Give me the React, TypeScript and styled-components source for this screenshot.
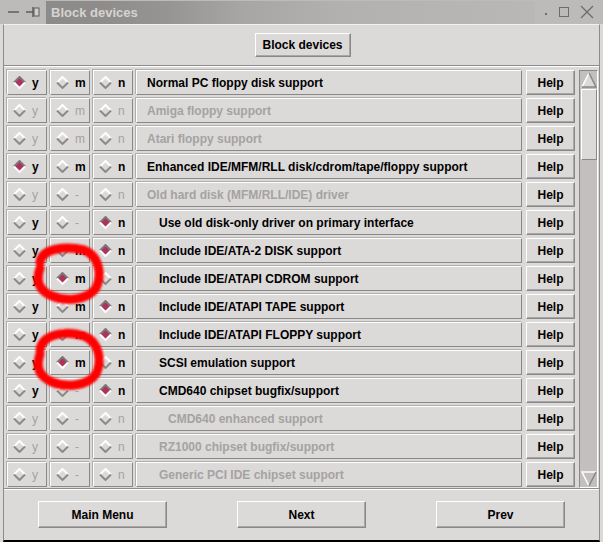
import React from 'react';
import styled, { createGlobalStyle } from 'styled-components';

const GlobalStyle = createGlobalStyle`
  html, body { margin: 0; padding: 0; background: #dcd9d9; }
  body { font-family: "Liberation Sans", Arial, sans-serif; }
`;

const BG = '#dcd9d9';
const LIGHT = '#ffffff';
const DARK = '#8a8787';
const DIS = '#a5a2a2';

const Window = styled.div`
  position: relative;
  width: 603px;
  height: 542px;
  background: ${BG};
  display: flex;
  flex-direction: column;
  overflow: hidden;
`;

const TitleBar = styled.div`
  height: 24px;
  flex: none;
  background: #bdbaba;
  display: flex;
  align-items: center;
  padding: 0 0 0 6px;
`;

const TitleBlock = styled.div`
  margin-left: 6px;
  width: 489px;
  height: 23px;
  display: flex;
  align-items: center;
  padding-left: 5px;
  box-sizing: border-box;
  background: linear-gradient(90deg, #8d8b8a 0%, #8f8d8c 12%, #979494 25%, #a8a5a5 40%, #b3b0b0 60%, #bab7b7 100%);
  color: #d6d3d3;
  font-weight: bold;
  font-size: 13px;
`;

const TitleControls = styled.div`
  display: flex;
  align-items: center;
  gap: 9px;
  margin-left: 10px;
`;

const Body = styled.div`
  flex: 1;
  display: flex;
  flex-direction: column;
  margin-left: 3px;
  margin-right: 3px;
  border-left: 1px solid #8e8b8b;
  border-right: 1px solid #8e8b8b;
  border-top: 1px solid #f2f0f0;
  border-bottom: 2px solid #000;
`;

const TopBar = styled.div`
  height: 40px;
  display: flex;
  justify-content: center;
  padding-top: 8px;
  box-sizing: border-box;
  padding-left: 2px;
`;

const RaisedButton = styled.button<{ $w: number; $h: number }>`
  width: ${(p) => p.$w}px;
  height: ${(p) => p.$h}px;
  background: ${BG};
  border: 1px solid;
  border-color: ${LIGHT} ${DARK} ${DARK} ${LIGHT};
  box-shadow: inset -1px -1px 0 #a9a6a6;
  font-family: "Liberation Sans", Arial, sans-serif;
  font-weight: bold;
  font-size: 12px;
  color: #000;
  padding: 0;
  margin: 0;
  cursor: pointer;
`;

const Separator = styled.div`
  height: 0;
  border-top: 1px solid #8e8b8b;
  border-bottom: 1px solid #fdfdfd;
`;

const ListArea = styled.div`
  display: flex;
  padding: 3px 2px 0 3px;
  gap: 4px;
  height: 418px;
`;

const Rows = styled.div`
  display: flex;
  flex-direction: column;
  gap: 3px;
`;

const Row = styled.div`
  display: flex;
  height: 25px;
  gap: 3px;
`;

const Cell = styled.div<{ $w: number }>`
  width: ${(p) => p.$w}px;
  height: 25px;
  box-sizing: border-box;
  background: ${BG};
  border: 1px solid;
  border-color: ${LIGHT} ${DARK} ${DARK} ${LIGHT};
  box-shadow: -1px -1px 0 #b0adad;
`;

const ChoiceCell = styled(Cell)`
  display: flex;
  align-items: center;
  padding-left: 5px;
  gap: 6px;
  font-weight: bold;
  font-size: 12px;
`;

const Letter = styled.span<{ $dis: boolean }>`
  color: ${(p) => (p.$dis ? DIS : '#000')};
  font-weight: ${(p) => (p.$dis ? 'normal' : 'bold')};
`;

const LabelCell = styled(Cell)<{ $indent: number; $dis: boolean }>`
  display: flex;
  align-items: center;
  padding-left: ${(p) => 10 + p.$indent}px;
  font-size: 12px;
  font-weight: bold;
  color: ${(p) => (p.$dis ? DIS : '#000')};
  white-space: nowrap;
`;

const HelpButton = styled(RaisedButton)`
  margin-left: 1px;
`;

const Scrollbar = styled.div`
  width: 19px;
  height: 418px;
  box-sizing: border-box;
  background: #c3bfbf;
  border: 1px solid;
  border-color: ${DARK} ${LIGHT} ${LIGHT} ${DARK};
  display: flex;
  flex-direction: column;
  padding: 1px 0 0 1px;
`;

const Thumb = styled.div`
  width: 16px;
  height: 71px;
  box-sizing: border-box;
  background: ${BG};
  border: 1px solid;
  border-color: ${LIGHT} ${DARK} ${DARK} ${LIGHT};
  margin-top: 1px;
`;

const Spacer = styled.div`
  flex: 1;
`;

const BottomBar = styled.div`
  flex: 1;
  display: flex;
  align-items: flex-start;
  padding-top: 11px;
  padding-left: 34px;
  gap: 70px;
`;

const Overlay = styled.svg`
  position: absolute;
  left: 0;
  top: 0;
  pointer-events: none;
`;

type Choice = 'y' | 'm' | 'n' | null;

const Diamond: React.FC<{ on: boolean }> = ({ on }) => (
  <svg width="13" height="13" viewBox="0 0 13 13" style={{ flex: 'none' }}>
    {on && <polygon points="6.5,1.5 11.5,6.5 6.5,11.5 1.5,6.5" fill="#b03060" />}
    <polyline points="1,6.5 6.5,1 12,6.5" fill="none" stroke={on ? '#7a7777' : LIGHT} strokeWidth="2" />
    <polyline points="1,6.5 6.5,12 12,6.5" fill="none" stroke={on ? LIGHT : '#8c8989'} strokeWidth="2" />
  </svg>
);

interface RowData {
  label: string;
  sel: Choice;
  m: string;
  dis?: boolean;
  mDis?: boolean;
  indent: number;
}

const rows: RowData[] = [
  { label: 'Normal PC floppy disk support', sel: 'y', m: 'm', indent: 0 },
  { label: 'Amiga floppy support', sel: null, m: 'm', dis: true, indent: 0 },
  { label: 'Atari floppy support', sel: null, m: 'm', dis: true, indent: 0 },
  { label: 'Enhanced IDE/MFM/RLL disk/cdrom/tape/floppy support', sel: 'y', m: 'm', indent: 0 },
  { label: 'Old hard disk (MFM/RLL/IDE) driver', sel: null, m: '-', dis: true, indent: 0 },
  { label: 'Use old disk-only driver on primary interface', sel: 'n', m: '-', mDis: true, indent: 12 },
  { label: 'Include IDE/ATA-2 DISK support', sel: 'n', m: 'm', indent: 12 },
  { label: 'Include IDE/ATAPI CDROM support', sel: 'm', m: 'm', indent: 12 },
  { label: 'Include IDE/ATAPI TAPE support', sel: 'n', m: 'm', indent: 12 },
  { label: 'Include IDE/ATAPI FLOPPY support', sel: 'n', m: 'm', indent: 12 },
  { label: 'SCSI emulation support', sel: 'm', m: 'm', indent: 12 },
  { label: 'CMD640 chipset bugfix/support', sel: 'n', m: '-', mDis: true, indent: 12 },
  { label: 'CMD640 enhanced support', sel: null, m: '-', dis: true, indent: 21 },
  { label: 'RZ1000 chipset bugfix/support', sel: null, m: '-', dis: true, indent: 12 },
  { label: 'Generic PCI IDE chipset support', sel: null, m: '-', dis: true, indent: 12 },
];

const ArrowUp = () => (
  <svg width="16" height="16" viewBox="0 0 16 16" style={{ flex: 'none' }}>
    <polygon points="8,1 15,15 1,15" fill={BG} />
    <polyline points="1,15 8,1" fill="none" stroke={LIGHT} strokeWidth="1.5" />
    <polyline points="8,1 15,15 1,15" fill="none" stroke={DARK} strokeWidth="1.5" />
  </svg>
);

const ArrowDown = () => (
  <svg width="16" height="16" viewBox="0 0 16 16" style={{ flex: 'none' }}>
    <polygon points="1,1 15,1 8,15" fill="#c3bfbf" />
    <polyline points="8,15 1,1 15,1" fill="none" stroke={LIGHT} strokeWidth="1.5" />
    <polyline points="15,1 8,15" fill="none" stroke={DARK} strokeWidth="1.5" />
  </svg>
);

const ListRow: React.FC<{ r: RowData }> = ({ r }) => {
  const d = !!r.dis;
  return (
    <Row>
      <ChoiceCell $w={40}>
        <Diamond on={r.sel === 'y'} />
        <Letter $dis={d}>y</Letter>
      </ChoiceCell>
      <ChoiceCell $w={40}>
        <Diamond on={r.sel === 'm'} />
        <Letter $dis={d || !!r.mDis}>{r.m}</Letter>
      </ChoiceCell>
      <ChoiceCell $w={40}>
        <Diamond on={r.sel === 'n'} />
        <Letter $dis={d}>n</Letter>
      </ChoiceCell>
      <LabelCell $w={386} $indent={r.indent} $dis={d}>
        {r.label}
      </LabelCell>
      <HelpButton $w={49} $h={25}>Help</HelpButton>
    </Row>
  );
};

export default function App() {
  return (
    <>
      <GlobalStyle />
      <Window>
        <TitleBar>
          <svg width="34" height="14" viewBox="0 0 34 14" style={{ flex: 'none' }}>
            <line x1="2" y1="7" x2="13" y2="7" stroke="#5f5d5d" strokeWidth="1.5" />
            <line x1="20" y1="7" x2="28" y2="7" stroke="#5f5d5d" strokeWidth="1.5" />
            <rect x="28" y="3" width="5" height="8" fill="#d0cdcd" stroke="#5f5d5d" strokeWidth="1" />
            <line x1="27" y1="2" x2="27" y2="12" stroke="#5f5d5d" strokeWidth="1.5" />
          </svg>
          <TitleBlock>Block devices</TitleBlock>
          <TitleControls>
            <svg width="50" height="14" viewBox="0 0 50 14">
              <rect x="0" y="8" width="2" height="2" fill="#6e6c6c" />
              <rect x="14.5" y="2.5" width="9" height="9" fill="none" stroke="#6e6c6c" strokeWidth="1" />
              <line x1="36" y1="1" x2="48" y2="13" stroke="#6e6c6c" strokeWidth="1.2" />
              <line x1="48" y1="1" x2="36" y2="13" stroke="#6e6c6c" strokeWidth="1.2" />
            </svg>
          </TitleControls>
        </TitleBar>
        <Body>
          <TopBar>
            <RaisedButton $w={96} $h={24}>Block devices</RaisedButton>
          </TopBar>
          <Separator />
          <ListArea>
            <Rows>
              {rows.map((r, i) => (
                <ListRow key={i} r={r} />
              ))}
            </Rows>
            <Scrollbar>
              <ArrowUp />
              <Thumb />
              <Spacer />
              <ArrowDown />
            </Scrollbar>
          </ListArea>
          <Separator />
          <BottomBar>
            <RaisedButton $w={129} $h={27}>Main Menu</RaisedButton>
            <RaisedButton $w={129} $h={27}>Next</RaisedButton>
            <RaisedButton $w={129} $h={27}>Prev</RaisedButton>
          </BottomBar>
        </Body>
        <Overlay width="603" height="542" viewBox="0 0 603 542">
          <defs>
            <filter id="soft" x="-20%" y="-20%" width="140%" height="140%">
              <feGaussianBlur stdDeviation="1.2" />
            </filter>
          </defs>
          <g fill="none" stroke="#ff0000" strokeWidth="9" strokeLinecap="round" filter="url(#soft)">
            <path d="M 40 262 C 42 248, 66 246, 84 250 C 100 256, 102 276, 96 288 C 88 300, 66 302, 52 296 C 38 290, 36 280, 40 268" />
            <path d="M 40 350 C 42 334, 66 330, 84 336 C 100 342, 102 362, 96 374 C 88 386, 66 388, 52 382 C 38 376, 36 366, 40 354" />
          </g>
        </Overlay>
      </Window>
    </>
  );
}
